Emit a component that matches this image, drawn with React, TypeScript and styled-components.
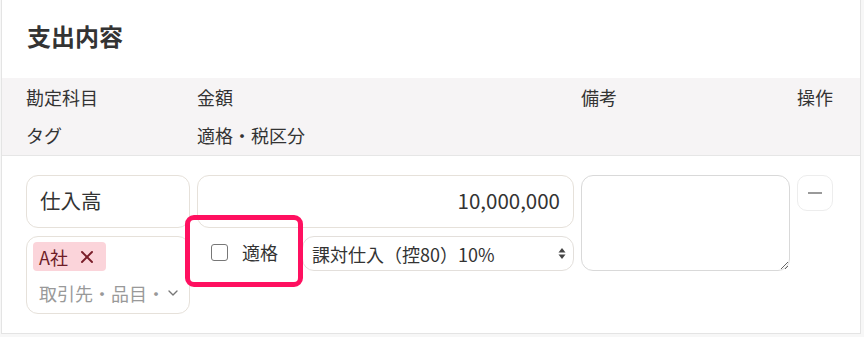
import styled, { createGlobalStyle } from "styled-components";
import { ChevronDown, X } from "lucide-react";

const GlobalStyle = createGlobalStyle`
  html, body {
    margin: 0;
    padding: 0;
    background: #f7f7f7;
  }
  body {
    font-family: "Noto Sans CJK JP", "Noto Sans", sans-serif;
    color: #333;
  }
  * { box-sizing: border-box; }
`;

const Page = styled.div`
  width: 864px;
  height: 337px;
  padding-left: 1px;
  background: #f7f7f7;
`;

const Card = styled.div`
  width: 860px;
  background: #fff;
  border: 1px solid #e4e4e4;
  border-top: none;
`;

const Title = styled.h2`
  margin: 0;
  padding: 18px 25px 24px;
  font-size: 24px;
  line-height: 36px;
  font-weight: 700;
  color: #333;
`;

const Cols = styled.div`
  display: grid;
  grid-template-columns: 164px 377px 209px 36px;
  column-gap: 7px;
  padding: 0 27px 0 24px;
`;

const Head = styled(Cols)`
  background: #f6f4f5;
  border-bottom: 1px solid #e6e6e6;
  grid-auto-rows: 38px;
  padding-bottom: 1px;
`;

const HeadCell = styled.div`
  font-size: 18px;
  line-height: 38px;
  color: #333;
  white-space: nowrap;
`;

const Body = styled(Cols)`
  padding-top: 19px;
  padding-bottom: 19px;
  align-items: start;
`;

const Stack = styled.div`
  display: flex;
  flex-direction: column;
  gap: 8px;
  position: relative;
`;

const TextBox = styled.div<{ $align?: "left" | "right" }>`
  height: 53px;
  border: 1px solid #e6e1da;
  border-radius: 12px;
  display: flex;
  align-items: center;
  justify-content: ${(p) => (p.$align === "right" ? "flex-end" : "flex-start")};
  padding: 0 13px 3px;
  font-size: 20.5px;
  color: #333;
`;

const TagBox = styled.div`
  height: 78px;
  border: 1px solid #e6e1da;
  border-radius: 12px;
  padding: 5px 6px 0 6px;
  display: flex;
  flex-direction: column;
  gap: 9px;
`;

const Chip = styled.span`
  align-self: flex-start;
  display: inline-flex;
  align-items: center;
  gap: 9px;
  height: 29px;
  padding: 0 9px 0 6px;
  border-radius: 4px;
  background: #fbd4da;
  color: #6e1c27;
  font-size: 18px;
`;

const TagInput = styled.div`
  display: flex;
  align-items: center;
  justify-content: space-between;
  padding: 0 2px 0 6px;
  font-size: 18px;
  color: #999;
  white-space: nowrap;
  overflow: hidden;
`;

const SubRow = styled.div`
  display: flex;
  align-items: flex-start;
`;

const CheckLabel = styled.label`
  width: 105px;
  flex: none;
  display: flex;
  align-items: center;
  gap: 14px;
  padding: 3px 0 0 14px;
  font-size: 18px;
  color: #333;
`;

const CheckSquare = styled.span`
  width: 17px;
  height: 17px;
  border: 1.5px solid #777;
  border-radius: 3px;
  background: #fff;
`;

const SelectBox = styled.div`
  flex: 1;
  height: 35px;
  border: 1px solid #e3dfdb;
  border-radius: 12px;
  display: flex;
  align-items: center;
  justify-content: space-between;
  padding: 0 7px 0 9px;
  font-size: 18px;
  color: #333;
  white-space: nowrap;
`;

const Highlight = styled.div`
  position: absolute;
  left: -12px;
  top: 40px;
  width: 118px;
  height: 72px;
  border: 5px solid #ff1060;
  border-radius: 9px;
  pointer-events: none;
`;

const Memo = styled.textarea`
  width: 209px;
  height: 96px;
  border: 1px solid #d9d9d9;
  border-radius: 12px;
  resize: vertical;
  outline: none;
  font: inherit;
  display: block;
`;

const MinusButton = styled.button`
  width: 36px;
  height: 36px;
  border: 1px solid #ededed;
  border-radius: 10px;
  background: #fff;
  display: flex;
  align-items: center;
  justify-content: center;
  padding: 0;
  &::before {
    content: "";
    width: 14px;
    height: 2px;
    background: #9a9a9a;
  }
`;

function UpDown() {
  return (
    <svg width="8" height="13" viewBox="0 0 8 13">
      <path d="M4 1 L7.5 5.5 H0.5 Z" fill="#444" />
      <path d="M4 12 L7.5 7.5 H0.5 Z" fill="#444" />
    </svg>
  );
}

export default function App() {
  return (
    <Page>
      <GlobalStyle />
      <Card>
        <Title>支出内容</Title>
        <Head>
          <HeadCell>勘定科目</HeadCell>
          <HeadCell>金額</HeadCell>
          <HeadCell>備考</HeadCell>
          <HeadCell>操作</HeadCell>
          <HeadCell>タグ</HeadCell>
          <HeadCell>適格・税区分</HeadCell>
          <HeadCell />
          <HeadCell />
        </Head>
        <Body>
          <Stack>
            <TextBox>仕入高</TextBox>
            <TagBox>
              <Chip>
                A社
                <X size={20} strokeWidth={2.3} color="#7a1e2a" />
              </Chip>
              <TagInput>
                取引先・品目・
                <ChevronDown size={18} color="#777" strokeWidth={2} />
              </TagInput>
            </TagBox>
          </Stack>
          <Stack>
            <TextBox $align="right">10,000,000</TextBox>
            <SubRow>
              <CheckLabel>
                <CheckSquare />
                適格
              </CheckLabel>
              <SelectBox>
                課対仕入（控80）10%
                <UpDown />
              </SelectBox>
            </SubRow>
            <Highlight />
          </Stack>
          <Memo />
          <MinusButton aria-label="削除" />
        </Body>
      </Card>
    </Page>
  );
}
